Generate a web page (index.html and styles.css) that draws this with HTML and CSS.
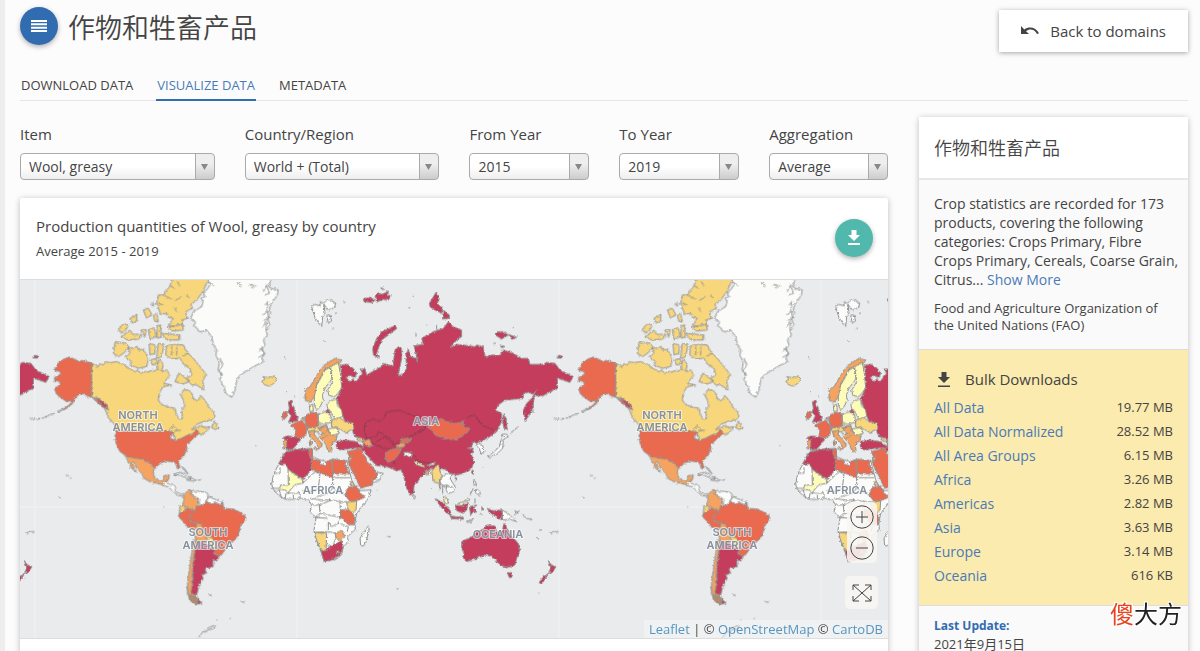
FILE: index.html
```html
<!DOCTYPE html>
<html lang="zh">
<head>
    <meta charset="UTF-8">
    <meta name="viewport" content="width=device-width, initial-scale=1.0">
    <title>作物和牲畜产品</title>
    <link rel="stylesheet" href="styles.css">
</head>
<body>
    <div class="page">
        <header class="header">
            <button class="menu-btn" aria-label="Menu">
                <svg width="16" height="12" viewBox="0 0 16 12"><path d="M0 1h16M0 4.300h16M0 7.700h16M0 11h16" stroke="#fff" stroke-width="1.900"/></svg>
            </button>
            <h1>作物和牲畜产品</h1>
            <a href="#" class="back-btn">
                <svg width="18" height="10" viewBox="0 0 18 10"><path d="M0 0v8h8L5 5.200C8.500 2.300 13.500 3 16 8l2-.8C15 1 8 0 3.300 3.400z" fill="#444"/></svg>
                Back to domains
            </a>
        </header>

        <nav class="tabs">
            <a href="#">DOWNLOAD DATA</a>
            <a href="#" class="active">VISUALIZE DATA</a>
            <a href="#">METADATA</a>
        </nav>

        <div class="content">
            <main class="main">
                <form class="filters">
                    <div class="filter">
                        <label for="item">Item</label>
                        <select id="item"><option>Wool, greasy</option></select>
                    </div>
                    <div class="filter">
                        <label for="country">Country/Region</label>
                        <select id="country"><option>World + (Total)</option></select>
                    </div>
                    <div class="filter">
                        <label for="from">From Year</label>
                        <select id="from"><option>2015</option></select>
                    </div>
                    <div class="filter">
                        <label for="to">To Year</label>
                        <select id="to"><option>2019</option></select>
                    </div>
                    <div class="filter">
                        <label for="aggregation">Aggregation</label>
                        <select id="aggregation"><option>Average</option></select>
                    </div>
                </form>

                <section class="card">
                    <div class="card-head">
                        <div>
                            <h2>Production quantities of Wool, greasy by country</h2>
                            <p>Average 2015 - 2019</p>
                        </div>
                        <button class="download-btn" aria-label="Download">
                            <svg width="14" height="16" viewBox="0 0 14 16"><path d="M4.500 0h5v5H13l-6 6-6-6h3.500zM1 13h12v2H1z" fill="#fff"/></svg>
                        </button>
                    </div>

                    <div class="map">
                        <svg class="world" viewBox="60 840 2604 1074" preserveAspectRatio="xMidYMid slice" role="img" aria-label="World map">
                            <defs>
                                <!-- roughens the coast lines -->
                                <filter id="coast" filterUnits="userSpaceOnUse" x="0" y="800" width="1800" height="1200">
                                    <feTurbulence type="fractalNoise" baseFrequency="0.120" numOctaves="2" seed="4"/>
                                    <feDisplacementMap in="SourceGraphic" scale="9" xChannelSelector="R" yChannelSelector="G"/>
                                </filter>
                                <g id="world">
                                    <g filter="url(#coast)">
                                    <!-- North and South America -->
                                    <g transform="translate(60 825)">
                                        <path class="none" d="M635 367L618 355 612 335 600 315 605 300 594 285 598 262 588 240 590 222 582 215 575 185 560 165 545 170 535 168 530 158 520 152 528 142 512 130 520 110 545 95 550 80 545 70 555 65 550 52 560 45 570 30 560 0H760L745 30 752 40 775 45 772 60 755 85 748 100 752 115 742 130 750 150 738 165 742 180 730 195 735 210 722 222 735 235 725 250 730 260 700 275 680 288 660 300 650 315 645 345Z"/>
                                        <path class="line" d="M665 35l-15-15M700 40l-10-12 18 5M730 50l10-20 8 25-14 5M735 90l10-12-4 22M730 120l12-15 4 25-14 6M728 155l12-15-2 25M715 230l12-12 4 20-16 10M600 250l8 20-10 15 10 15M565 20l18 12"/>
                                        <path class="d" d="M215 265L185 256 178 260 165 253 147 246 130 253 115 262 110 275 101 285 120 290 122 297 103 308 105 320 122 320 118 330 103 340 110 358 125 370 140 380 155 376 150 388 130 402 112 411 140 400 158 385 165 368 178 358 190 356 198 362 215 366ZM215 366L232 375 245 378 258 400 250 398 235 385Z"/>
                                        <path class="b" d="M215 265L235 275 240 265 250 270 258 260 270 263 290 260 310 268 325 278 345 290 355 285 362 297 370 290 378 292 395 287 415 285 412 270 418 252 430 268 425 290 440 285 450 300 440 312 430 325 455 330 430 335 418 352 415 375 425 390 445 395 465 400 470 420 478 432 487 430 485 405 495 395 490 375 482 360 490 345 505 345 515 355 520 370 532 378 543 362 550 370 560 385 570 400 580 410 585 425 575 435 550 440 530 448 515 465 530 458 545 450 550 458 570 455 560 468 545 480 530 472 500 482 485 490 468 495 460 480 440 468H287L282 445 270 435 258 410 250 390 235 372 215 366ZM575 458L583 438 598 460 585 463Z"/>
                                        <path class="b" d="M430 60L450 32 460 0H575L560 25 548 50 528 78 512 88 518 100 497 110 502 130 485 135 490 148 470 146 462 155 445 150 460 130 445 128 440 115 422 118 410 85 415 60ZM443 155L487 150 490 165 455 168ZM425 175L480 180 478 195 440 195ZM370 105L385 100 395 118 380 130ZM400 120L410 115 415 140 405 140ZM295 165L310 145 325 150 318 165 305 175ZM330 130L350 118 350 138 335 144ZM303 185L330 165 338 178 365 178 360 192 325 195ZM362 165L378 163 375 185ZM385 165L402 158 410 185 390 192ZM411 152L422 150 424 185 412 190ZM285 200L320 205 325 220 310 235 295 245 280 235ZM325 215L340 222 350 212 355 225 370 222 385 250 380 275 355 280 330 270 335 260 315 245 330 235ZM387 205L405 210 405 235 390 240ZM415 205L432 208 425 245 410 250ZM440 212L465 208 490 210 500 230 520 250 540 275 560 300 548 315 552 345 530 330 515 330 500 310 515 300 510 280 492 270 480 250 455 252 437 240ZM465 320L478 292 490 305 508 318 490 327ZM392 88l8-4 0 10zM392 255l15-5 8 15-18 5z"/>
                                        <path class="line" d="M430 60l25 12M450 32l15 8M465 78l20-15M500 60l8 10M470 20l10 12M415 85l15 5M470 110l-8-15M455 215v25M470 215v25M505 235l-18 8M445 470l15-18 12 15 10-2M450 495l-5-20M465 492l-6-22 12-3"/>
                                        <path class="d" d="M287 468H440L460 472 450 490 468 496 485 490 500 482 520 475 530 462 538 475 522 488 500 510 500 525 490 545 475 558 480 580 474 582 465 562 440 558 425 562 405 578 395 570 385 560 330 551 318 543 300 530 290 510 285 490Z"/>
                                        <path class="c" d="M315 543L340 548 365 552 385 562 403 578 400 595 405 610 420 618 430 615 432 602 448 600 445 615 432 622 430 630 410 625 390 620 372 610 365 595 350 580 340 560 334 562 345 585 350 592 335 580 322 555Z"/>
                                        <path class="none" d="M430 622L440 620 445 628 460 628 467 635 465 648 480 658 490 655 492 662 475 662 460 650 445 635 428 632ZM460 598L480 592 500 602 515 610 500 610 480 600ZM500 615l15-5 15 5-12 3zM485 575l10 8 8 12-14-13z"/>
                                        <path class="e" d="M228 365l10 8 18 12 10 20-22-15zM38 246l8-5 9 3-6 5z"/>
                                        <path class="c" d="M490 662L505 644 517 646 512 658 535 670 533 690 525 708 508 700 487 692 492 675ZM530 743L548 748 560 765 575 782 558 798 530 800 520 770Z"/>
                                        <path class="b" d="M480 692L498 695 490 710 478 714ZM557 785L575 785 587 802 588 820 575 818Z"/>
                                        <path class="none" d="M515 650L530 648 560 652 568 665 557 678 560 688 540 692 535 670 514 660ZM566 665L590 675 609 680 607 692 588 683 575 688 558 680Z"/>
                                        <path class="d" d="M478 715L490 710 500 700 525 708 508 725 512 740 530 745 527 768 500 755 490 740 475 725ZM525 708L530 692 545 692 560 680 575 688 588 683 605 692 608 680 611 700 640 702 672 718 678 730 660 755 655 785 640 798 625 802 615 825 600 845 580 833 590 820 585 802 573 785 550 775 547 750 530 743 515 740 508 730 515 715Z"/>
                                        <path class="c" d="M520 795L530 800 522 840 518 880 515 920 515 950 530 965 540 985 530 988 510 975 502 950 503 920 510 870 516 830Z"/>
                                        <path class="e" d="M528 800L555 800 570 818 588 822 580 835 598 845 590 858 578 855 580 875 555 882 560 895 545 900 550 910 540 925 535 940 530 960 512 955 518 930 518 880 525 830ZM532 972l15 12-15 3z"/>
                                        <path class="mix" d="M505 958l22 7 6 18-4 5-20-12z"/>
                                        <path class="line" d="M500 935l5 12-4 10M30 772l8-6 4 8M565 960h10M662 978l12 5M536 1088l10-15 12-6M560 1062l10-6 16-6-4 10-18 5-8 8M590 1034h2M628 1030h4M118 666h3M430 696h3M706 512h3M30 431h8M50 431h10M65 429h8M80 423h6M95 418h6M138 600l8 3M150 608h4M535 615h8M487 595h10"/>
                                    </g>

                                    <!-- Europe and Asia -->
                                    <g transform="translate(780 825)">
                                        <path class="e" d="M240 270L262 268 280 280 290 295 285 308 270 302 258 308 270 320 278 312 288 320 300 305 308 295 300 282 315 282 320 300 345 285 365 275 370 265 385 270 400 272 402 245 405 225 415 215 425 220 425 250 420 275 415 302 428 298 440 280 437 240 445 222 452 245 470 250 472 262 468 235 462 212 490 208 485 190 520 170 550 160 565 140 580 155 605 165 605 185 590 195 572 218 590 208 625 212 645 215 650 210 670 215 675 245 695 240 720 240 730 225 760 235 785 250 805 250 810 268 850 268 860 262 885 265 900 285 920 295 940 305 930 322 910 315 892 310 893 340 870 350 850 362 825 362 820 380 820 395 808 420 795 438 790 405 800 385 820 365 828 345 820 358 805 352 790 355 790 370 770 372 735 375 715 390 705 405 725 415 725 440 710 470 690 485 670 495 650 505 640 500 635 515 622 520 640 520 635 540 642 560 635 580 610 595 590 600 570 595 560 585 545 580 530 590 515 580 495 595 480 610 462 635 460 655 450 660 440 640 430 600 422 583 415 588 400 583 380 575 350 572 338 560 325 545 312 530 300 518 275 520 240 525 228 515 230 500 255 495 290 500 310 515 310 490 285 485 278 470 280 445 255 440 240 400 235 385 230 370 245 340 240 310 245 290Z"/>
                                        <path class="e" d="M340 240L338 220 350 190 365 170 405 152 411 160 385 180 365 195 355 220 350 235 358 250ZM310 72l20-5 15 8-8 8-25-3zM345 65l10-12 10 5 20-10-2 14 12-2-10 15-15-2-20 8zM362 40l6-4 2 8zM508 85L528 52 538 70 532 85 548 100 545 115 525 105 510 95ZM550 105L568 120 568 130 547 132ZM706 180L710 170 730 170 745 180 725 192ZM745 178L770 187 755 193ZM720 210L735 215 725 218ZM890 247l8-5 8 3-6 5zM730 415L738 430 742 465 732 460 728 440ZM635 588l5-4 0 14-5-4zM585 608l6 2-3 6z"/>
                                        <path class="none" d="M155 95L165 88 178 92 182 80 192 88 195 115 188 125 185 155 176 145 165 128 160 112ZM190 85L205 72 228 85 222 98 205 105ZM200 122l10-2 5 18-10 5z"/>
                                        <path class="b" d="M5 320L15 312 8 305 25 308 45 303 50 318 30 333 15 330Z"/>
                                        <path class="c" d="M135 345L150 335 165 310 180 285 200 265 225 250 243 255 242 265 225 268 210 275 195 282 185 300 170 325 163 365 150 382 135 375Z"/>
                                        <path class="a" d="M210 278L217 310 195 340 187 360 190 375 180 395 170 405 163 390 163 365 170 330 185 305 195 285ZM212 275L235 262 242 300 245 340 225 365 207 362 203 345 218 320 215 300ZM212 378L230 372 232 390 245 405 248 425 225 432 215 415 203 400 200 388ZM175 417L198 410 212 418 215 442 190 448 175 440ZM148 392L158 388 160 408 150 410ZM203 462L230 458 238 475 215 482Z"/>
                                        <path class="e" d="M85 380L98 378 94 390 102 395 104 412 115 425 112 438 85 442 94 422 84 412 88 400ZM198 405L210 405 208 413 198 412ZM70 487L85 483 122 488 120 497 108 512 98 522 80 525Z"/>
                                        <path class="d" d="M68 415L82 408 80 428 66 433ZM138 420L155 412 172 415 175 448 160 460 140 455 135 440ZM92 450L125 435 140 455 138 480 122 490 105 485 108 465Z"/>
                                        <path class="b" d="M215 435L240 428 255 440 280 445 282 462 265 468 262 475 240 462 215 455ZM140 458L165 458 178 448 190 455 175 470 145 470ZM290 488L310 490 312 500 295 498Z"/>
                                        <path class="c" d="M70 496L80 495 80 520 72 522ZM145 470L165 465 162 478 185 505 187 512 176 522 170 503 150 485ZM175 458L200 450 208 478 232 482 226 500 214 502 216 528 205 530 195 505 178 485 188 475ZM148 500l5-6 2 16-6 2zM160 520l14-2-4 8zM126 430l8-4 4 14-8-4z"/>
                                        <path class="line" d="M165 450l14 12 22-12M190 478l15-18M172 475l15 2M185 490l15-8"/>
                                        <path class="edge" d="M320 490L312 460 318 440 340 432 360 440 375 425 378 412 415 405 455 420 485 430 498 455 475 470 450 485 425 490 405 510 390 490 355 470 350 485 320 490M500 455L485 470 462 475M310 500l30 5 30 15 25 0M350 500l25-15 30 30M620 425l25-5 20 30 35 15M400 520L405 570M460 540l15 20 45 5"/>
                                        <path class="d" d="M498 455L520 445 545 430 560 440 585 445 610 440 610 455 630 460 620 475 585 495 550 490 525 480 515 465ZM375 535L390 525 410 520 425 522 415 540 405 552 385 562 378 555ZM425 490l30 0-6 12-20 0 -10-4zM262 530L290 522 306 520 308 535 318 548 320 560 338 575 348 592 353 598 350 612 338 612 338 630 300 640 290 612 272 580 265 560 270 548Z"/>
                                        <path class="c" d="M408 512l14-8 14 2-4 10-14 2-8-1zM308 500l20-8 8 20-12 4-10-10zM265 550l10-10 2 8-8 14zM495 585l12 2-2 12-7-2z"/>
                                        <path class="b" d="M515 590L527 573 537 570 540 590 548 605 538 612 541 645 536 625 520 620Z"/>
                                        <path class="a" d="M462 558L475 563 495 573 490 577 465 567ZM550 665L560 668 566 685 553 682ZM595 685L610 680 625 668 630 675 615 680 605 692Z"/>
                                        <path class="none" d="M430 532l14 0 14 4-6 10-16-3zM500 572l20-2 8-8-12 2zM353 592L370 595 360 612 338 625 340 612 350 612ZM548 605L565 595 577 598 570 610 585 635 580 650 565 655 558 645 560 630 545 632 540 615ZM656 505L668 510 672 530 663 537 658 520 650 513ZM682 545L700 533 718 515 723 495 730 497 728 520 710 537 688 547ZM725 478L740 478 745 484 732 492ZM460 658l6 6-2 8-6-4zM640 615l6 4 4 12-8-2zM648 640l12 10 0 14-14-12z"/>
                                        <path class="line" d="M750 475l25-20M548 655l0-20 30 0M640 640l-10 20M815 408h10M890 432h8M905 431h8M925 425h8M940 420l14-5M222 80l-4 0M250 82h6M225 115h3M218 160h4M72 248h4M192 198h3M80 348v6M104 364v2M445 98h6M458 62h4M498 150h4M468 175v10M530 150v20M700 205h6M758 158h4M668 578h3M515 640v3M350 645h2M380 785h12M410 942h6"/>
                                        <path class="e" d="M525 672L545 680 570 705 575 723 555 710 535 685ZM570 723L610 727 610 733 575 731ZM585 690L605 693 625 682 620 705 610 715 590 707ZM628 695L650 690 640 700 650 712 640 710 632 720ZM660 715l8 4M682 700L700 707 725 705 728 735 715 730 700 720 688 713ZM665 695l6 8-5 2z"/>
                                        <path class="none" d="M727 705L750 720 770 740 750 733 728 735ZM620 738l12-3 10-4-8 8-12 4zM765 708l12 4-10 4z"/>
                                        <path class="line" d="M785 718l15 12 15 4M810 730l8 6M838 765h8M870 775l12-6M828 788l12 6M775 710l4-4M865 910h3M835 954h3M970 668h3M645 685v-15"/>
                                        <path class="e" d="M605 800L635 785 655 765 670 763 680 750 705 753 710 770 725 775 732 745 745 765 755 783 775 805 780 825 770 850 765 870 745 877 725 873 710 860 695 843 675 840 650 850 620 860 610 850 612 835 605 820ZM742 893L758 893 755 907 748 908ZM865 857L875 870 888 875 875 895 868 890 872 877ZM868 893L860 905 845 927 837 923 850 905Z"/>
                                    </g>

                                    <!-- Africa -->
                                    <g transform="translate(780 1290)">
                                        <path class="none" d="M75 65L105 58 155 55 158 80 180 90 215 100 220 88 260 92 265 110 275 150 285 170 300 182 333 180 325 205 290 250 284 280 286 298 262 320 265 335 250 350 245 375 225 388 192 394 185 370 165 320 162 300 168 265 150 245 155 225 145 208 120 205 100 208 75 208 55 195 38 175 35 160 42 130 55 105ZM325 288L328 300 315 345 302 348 300 325 315 300Z"/>
                                        <path class="line" d="M42 130H60V112M128 160L165 125 180 132 175 175 160 185 130 182M218 132V175L205 190 170 200M218 143H270M218 175L255 195M150 205L185 210 215 210 240 215 262 215M178 225L215 210M155 225L178 225 180 250 165 262 205 265M180 250L240 262M240 215L242 262 235 280 215 290 205 275 205 305 163 307M165 262L180 262M205 305L230 310M242 282L265 290 262 305M198 312V345L215 350 228 325M285 285L265 285M100 208V190L120 188V205M75 208L78 190 98 188M38 175H60M42 185L58 180 65 205"/>
                                        <path class="e" d="M55 103L75 68 105 58 150 57 150 75 158 115 130 147 84 118 78 102Z"/>
                                        <path class="a" d="M84 118L128 150 128 160 105 164 95 175 85 187 75 180 58 178 62 165 85 165Z"/>
                                        <path class="d" d="M146 58L157 57 158 85 150 80ZM153 85L180 92 182 102 198 108 200 95 215 88 218 143 180 128 155 120ZM218 88L262 92 255 100 268 132 218 132ZM265 172L290 168 300 190 318 200 290 212 270 214 255 195ZM242 240L265 238 282 255 285 280 265 283 242 262Z"/>
                                        <path class="b" d="M260 217L290 213 288 240 278 250 264 237ZM272 155l8 4 4 8-14-2zM163 307L200 310 198 362 182 360 170 330Z"/>
                                        <path class="c" d="M225 310L245 302 255 318 240 332 228 322Z"/>
                                        <path class="e" d="M183 362L198 362 210 350 245 332 250 350 240 375 215 390 192 394Z"/>
                                        <path class="b" d="M228 366l6-4 4 5-6 4z"/>
                                    </g>
                                    </g>

                                    <g class="place">
                                        <text x="414" y="1256">NORTH</text>
                                        <text x="414" y="1293">AMERICA</text>
                                        <text x="624" y="1609">SOUTH</text>
                                        <text x="624" y="1647">AMERICA</text>
                                        <text x="969" y="1483">AFRICA</text>
                                        <text x="1279" y="1274">ASIA</text>
                                        <text x="1494" y="1615">OCEANIA</text>
                                    </g>
                                </g>
                            </defs>
                            <path class="tiles" d="M105 840V1914M891 840V1914M1677 840V1914M2463 840V1914M60 1521H2664"/>
                            <use href="#world" x="-1572"/>
                            <use href="#world"/>
                            <use href="#world" x="1572"/>
                        </svg>

                        <div class="map-tools">
                            <div class="zoom">
                                <button aria-label="Zoom in"><svg width="24" height="24" viewBox="0 0 24 24"><circle cx="12" cy="12" r="11.200"/><path d="M6 12h12M12 6v12"/></svg></button>
                                <button aria-label="Zoom out"><svg width="24" height="24" viewBox="0 0 24 24"><circle cx="12" cy="12" r="11.200"/><path d="M6 12h12"/></svg></button>
                            </div>
                            <button class="full" aria-label="Full screen"><svg width="20" height="18" viewBox="0 0 20 18"><path d="M1 6V1h6M13 1h6v5M19 12v5h-6M7 17H1v-5M1 1l18 16M19 1L1 17"/></svg></button>
                        </div>
                        <div class="attribution"><a href="#">Leaflet</a> | © <a href="#">OpenStreetMap</a> © <a href="#">CartoDB</a></div>
                    </div>
                    <div class="card-foot"></div>
                </section>
            </main>

            <aside class="sidebar">
                <h2>作物和牲畜产品</h2>
                <div class="about">
                    <p>Crop statistics are recorded for 173 products, covering the following categories: Crops Primary, Fibre Crops Primary, Cereals, Coarse Grain, Citrus... <a href="#">Show More</a></p>
                    <p class="owner">Food and Agriculture Organization of the United Nations (FAO)</p>
                </div>
                <div class="bulk">
                    <h3>
                        <svg width="14" height="16" viewBox="0 0 14 16"><path d="M4.500 1h5v5H13l-6 6-6-6h3.500zM1 14.500h12v1.500H1z" fill="#444"/></svg>
                        Bulk Downloads
                    </h3>
                    <ul>
                        <li><a href="#">All Data</a><span>19.77 MB</span></li>
                        <li><a href="#">All Data Normalized</a><span>28.52 MB</span></li>
                        <li><a href="#">All Area Groups</a><span>6.15 MB</span></li>
                        <li><a href="#">Africa</a><span>3.26 MB</span></li>
                        <li><a href="#">Americas</a><span>2.82 MB</span></li>
                        <li><a href="#">Asia</a><span>3.63 MB</span></li>
                        <li><a href="#">Europe</a><span>3.14 MB</span></li>
                        <li><a href="#">Oceania</a><span>616 KB</span></li>
                    </ul>
                </div>
                <div class="updated">
                    <strong>Last Update:</strong>
                    <span>2021年9月15日</span>
                </div>
            </aside>
        </div>
    </div>
    <div class="watermark"><span>傻</span>大方</div>
</body>
</html>
```

FILE: styles.css
```css
* {
    box-sizing: border-box;
}
body {
    margin: 0;
    background-color: #fcfcfc;
    color: #444;
    font-family: "Open Sans", "Noto Sans CJK SC", sans-serif;
    font-size: 14px;
}
h1, h2, h3, p, ul {
    margin: 0;
    padding: 0;
    font-weight: normal;
}
a {
    color: #4a7ab8;
    text-decoration: none;
}
button {
    border: none;
    padding: 0;
    cursor: pointer;
}
svg {
    display: block;
}
.page {
    min-height: 100vh;
    border-left: 5px solid #eee;
    padding: 0 12px 0 15px;
}
.header {
    display: flex;
    align-items: flex-start;
    gap: 10px;
    height: 69px;
    padding-top: 7px;
}
.menu-btn, .download-btn {
    display: flex;
    align-items: center;
    justify-content: center;
    width: 38px;
    height: 38px;
    border-radius: 50%;
    background-color: #316cb1;
    box-shadow: 0 2px 5px rgba(0, 0, 0, 0.3);
}
.header h1 {
    font-size: 27px;
    font-weight: 350;
    line-height: 42px;
}
.back-btn {
    display: flex;
    align-items: center;
    gap: 11px;
    height: 42px;
    margin: 3px 0 0 auto;
    padding: 0 22px;
    background-color: #fff;
    box-shadow: 0 1px 5px rgba(0, 0, 0, 0.35);
    color: #444;
    font-size: 15px;
}
.tabs {
    display: flex;
    gap: 22px;
    border-bottom: 1px solid #e6e6e6;
    font-size: 13px;
}
.tabs a {
    height: 32px;
    margin-bottom: -1px;
    padding: 0 1px;
    color: #444;
    line-height: 33px;
}
.tabs .active {
    border-bottom: 2px solid #316cb1;
    color: #4a7ab8;
}
.content {
    display: flex;
    align-items: flex-start;
    gap: 31px;
    padding-top: 16px;
}
.main {
    flex: 1;
    min-width: 0;
}
.filters {
    display: grid;
    grid-template-columns: 195fr 195fr 120fr 120fr 119fr;
    gap: 30px;
    padding-top: 7px;
}
.filter label {
    display: block;
    font-size: 15px;
    line-height: 20px;
    margin-bottom: 9px;
}
.filter select {
    appearance: none;
    display: block;
    width: 100%;
    height: 27px;
    padding: 0 24px 0 8px;
    border: 1px solid #aaa;
    border-radius: 4px;
    background:
        url("data:image/svg+xml,%3Csvg xmlns='http://www.w3.org/2000/svg' width='7' height='6'%3E%3Cpath d='M0 0h7L3.500 6z' fill='%23888'/%3E%3C/svg%3E") right 6px center no-repeat,
        linear-gradient(#aaa, #aaa) right 18px top / 1px 100% no-repeat,
        linear-gradient(#eee 40%, #ccc) right top / 18px 100% no-repeat,
        linear-gradient(#fff 50%, #eee);
    color: #444;
    font-family: inherit;
    font-size: 14px;
}
.card {
    margin-top: 18px;
    border-radius: 2px;
    background-color: #fff;
    box-shadow: 0 1px 6px rgba(0, 0, 0, 0.25);
}
.card-head {
    display: flex;
    justify-content: space-between;
    height: 82px;
    padding: 17px 15px 0 16px;
    border-bottom: 1px solid #ddd;
}
.card-head h2 {
    font-size: 15px;
    line-height: 22px;
}
.card-head p {
    margin-top: 6px;
    font-size: 13px;
    line-height: 16px;
}
.download-btn {
    margin-top: 4px;
    background-color: #50b8ac;
}
.map {
    position: relative;
    border-bottom: 1px solid #ddd;
}
.world {
    width: 100%;
    height: 358px;
    background-color: #e9ebed;
    stroke: #909090;
    stroke-width: 3;
    stroke-linejoin: round;
}
.world .a { fill: #fefcb9; }
.world .b { fill: #f8d77c; }
.world .c { fill: #f4a460; }
.world .d { fill: #e96b50; }
.world .e { fill: #c43e5b; }
.world .mix { fill: #b48a68; }
.world .none { fill: #fbfbfa; }
.world .line { fill: none; }
.world .tiles {
    fill: none;
    stroke: #f1f2f3;
}
.world .edge {
    fill: none;
    stroke: #8c3b50;
}
.world .place {
    fill: #84909c;
    stroke: rgba(255, 255, 255, 0.6);
    stroke-width: 6;
    paint-order: stroke;
    font-family: Inter, sans-serif;
    font-size: 33px;
    font-weight: 600;
    text-anchor: middle;
}
.map-tools {
    position: absolute;
    right: 10px;
    bottom: 29px;
    display: flex;
    flex-direction: column;
    align-items: center;
    gap: 13px;
}
.map-tools svg {
    fill: none;
    stroke: #444;
    stroke-width: 1;
}
.zoom {
    display: flex;
    flex-direction: column;
    gap: 7px;
    padding: 3px;
    border-radius: 5px;
    background-color: rgba(248, 246, 242, 0.9);
}
.zoom button {
    background: none;
}
.full {
    display: flex;
    align-items: center;
    justify-content: center;
    width: 33px;
    height: 33px;
    border-radius: 5px;
    background-color: #f6f5f2;
}
.attribution {
    position: absolute;
    right: 0;
    bottom: 0;
    padding: 0 5px;
    background-color: rgba(255, 255, 255, 0.3);
    font-size: 13px;
    line-height: 18px;
}
.attribution a {
    color: #5696bd;
}
.card-foot {
    height: 40px;
}
.sidebar {
    width: 269px;
    border-radius: 2px;
    background-color: #fafafa;
    box-shadow: 0 1px 6px rgba(0, 0, 0, 0.25);
}
.sidebar h2 {
    height: 63px;
    padding-left: 15px;
    border-bottom: 2px solid #e8e8e8;
    background-color: #fff;
    font-size: 18px;
    font-weight: 350;
    line-height: 62px;
}
.about {
    padding: 14px 7px 15px 15px;
    border-bottom: 1px solid #ddd;
    line-height: 19px;
}
.about .owner {
    margin-top: 11px;
    padding-right: 8px;
    font-size: 13px;
    line-height: 17px;
}
.bulk {
    padding: 18px 15px 12px;
    border-bottom: 1px solid #ddd;
    background-color: #fbebae;
}
.bulk h3 {
    display: flex;
    align-items: center;
    gap: 14px;
    padding-left: 3px;
    font-size: 15px;
    line-height: 22px;
}
.bulk ul {
    padding: 6px 0 5px;
    list-style: none;
}
.bulk li {
    display: flex;
    justify-content: space-between;
    height: 24px;
    line-height: 24px;
}
.bulk span {
    font-size: 13px;
    line-height: 22px;
}
.updated {
    display: flex;
    flex-direction: column;
    padding: 11px 15px 16px;
    line-height: 18px;
}
.updated strong {
    color: #316cb1;
    font-size: 12px;
}
.updated span {
    font-size: 13px;
}
.watermark {
    position: fixed;
    right: 18px;
    bottom: 20px;
    color: #222;
    font-family: "Noto Sans CJK SC", sans-serif;
    font-size: 24px;
    line-height: 36px;
    text-shadow: 1px 1px 0 #fff, -1px -1px 0 #fff, 1px -1px 0 #fff, -1px 1px 0 #fff, 0 0 3px #fff;
}
.watermark span {
    color: #e8431f;
}
```
